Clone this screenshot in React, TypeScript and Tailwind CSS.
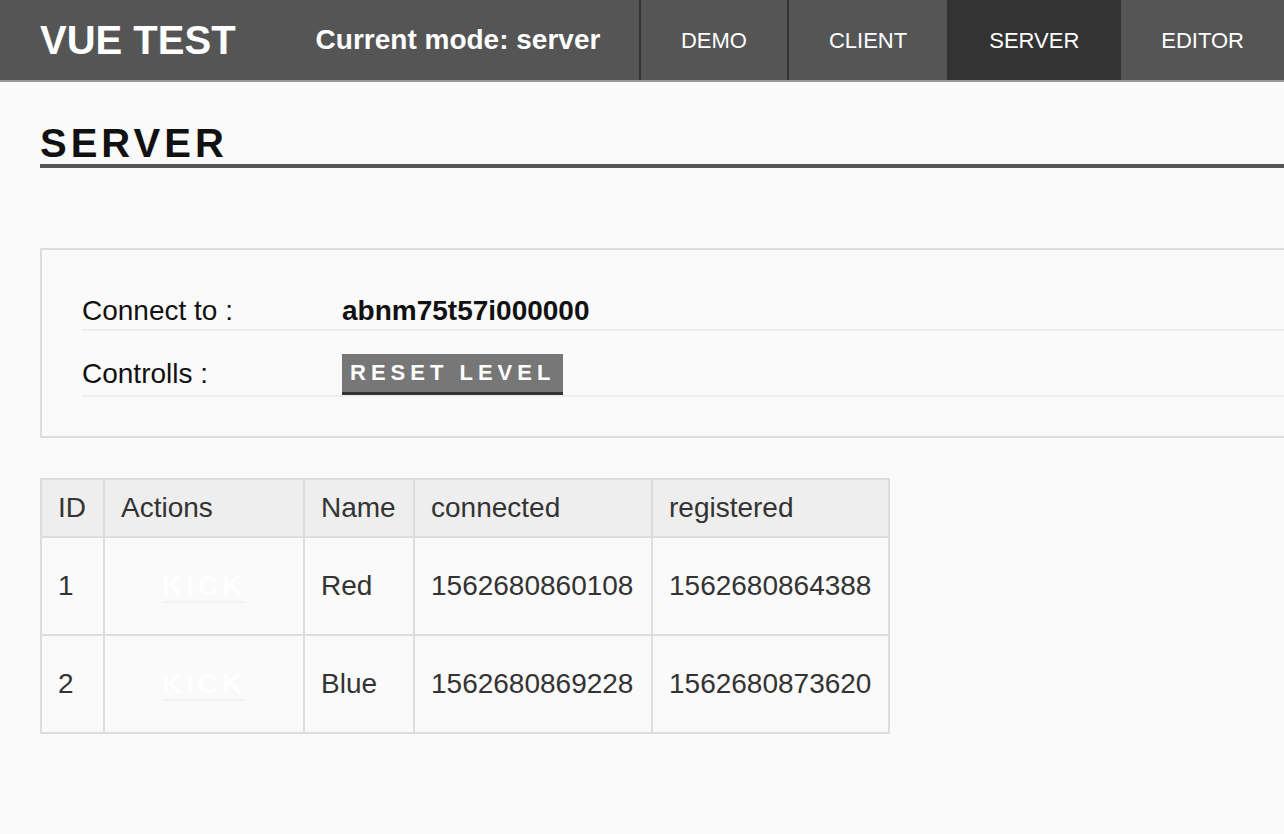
import React from 'react';

const navItems = ['DEMO', 'CLIENT', 'SERVER', 'EDITOR'];

const players = [
  { id: 1, name: 'Red', connected: '1562680860108', registered: '1562680864388' },
  { id: 2, name: 'Blue', connected: '1562680869228', registered: '1562680873620' },
];

export default function App() {
  const active = 'SERVER';

  return (
    <div className="min-h-[834px] w-[1284px] overflow-hidden bg-[#fafafa] font-['Liberation_Sans',Arial,sans-serif]">
      {/* TOP BAR */}
      <header className="h-[82px] bg-[#555] border-b-2 border-[#999] flex items-stretch text-white">
        <div className="pl-10 flex items-center">
          <span className="text-[40px] font-bold leading-none">VUE TEST</span>
        </div>
        <div className="ml-[80px] flex items-center">
          <span className="text-[28px] font-bold leading-none">Current mode: server</span>
        </div>
        <nav className="ml-auto flex items-stretch">
          {navItems.map((item) => (
            <a
              key={item}
              className={
                item === active
                  ? 'flex items-center px-10 border-l-2 border-[#333] bg-[#333] text-[22px]'
                  : 'flex items-center px-10 border-l-2 border-[#333] text-[22px]'
              }
            >
              {item}
            </a>
          ))}
        </nav>
      </header>

      <main className="pl-10 pt-[41px]">
        <h1 className="text-[40px] leading-[40px] font-bold tracking-[4px] text-[#111] pb-px border-b-4 border-[#555]">
          SERVER
        </h1>

        {/* INFO PANEL */}
        <section className="mt-[80px] border-2 border-r-0 border-[#ddd] pl-10 pt-[43px] pb-[39px] text-[28px] text-[#111]">
          <div className="flex items-center h-[38px] border-b-2 border-[#eee]">
            <span className="w-[260px]">Connect to :</span>
            <span className="font-bold">abnm75t57i000000</span>
          </div>
          <div className="flex items-center pt-[22px] border-b-2 border-[#eee]">
            <span className="w-[260px]">Controlls :</span>
            <button className="h-[41px] px-2 bg-[#777] border-b-[3px] border-[#333] text-white text-[22px] font-bold tracking-[5px] leading-none">
              RESET LEVEL
            </button>
          </div>
        </section>

        {/* PLAYERS TABLE */}
        <table className="mt-[40px] w-[848px] table-fixed border-collapse border-2 border-[#ddd] text-[28px] text-[#333]">
          <colgroup>
            <col className="w-[63px]" />
            <col className="w-[200px]" />
            <col className="w-[110px]" />
            <col className="w-[238px]" />
            <col className="w-[237px]" />
          </colgroup>
          <thead>
            <tr className="h-[58px] bg-[#eee]">
              <th className="border-2 border-[#ddd] px-4 text-left font-normal">ID</th>
              <th className="border-2 border-[#ddd] px-4 text-left font-normal">Actions</th>
              <th className="border-2 border-[#ddd] px-4 text-left font-normal">Name</th>
              <th className="border-2 border-[#ddd] px-4 text-left font-normal">connected</th>
              <th className="border-2 border-[#ddd] px-4 text-left font-normal">registered</th>
            </tr>
          </thead>
          <tbody>
            {players.map((p) => (
              <tr key={p.id} className="h-[98px]">
                <td className="border-2 border-[#ddd] px-4">{p.id}</td>
                <td className="border-2 border-[#ddd] px-4 text-center">
                  <span className="inline-block text-white font-bold tracking-[4px] leading-[30px] border-b-2 border-[#f2f2f2]">
                    KICK
                  </span>
                </td>
                <td className="border-2 border-[#ddd] px-4">{p.name}</td>
                <td className="border-2 border-[#ddd] px-4">{p.connected}</td>
                <td className="border-2 border-[#ddd] px-4">{p.registered}</td>
              </tr>
            ))}
          </tbody>
        </table>
      </main>
    </div>
  );
}
